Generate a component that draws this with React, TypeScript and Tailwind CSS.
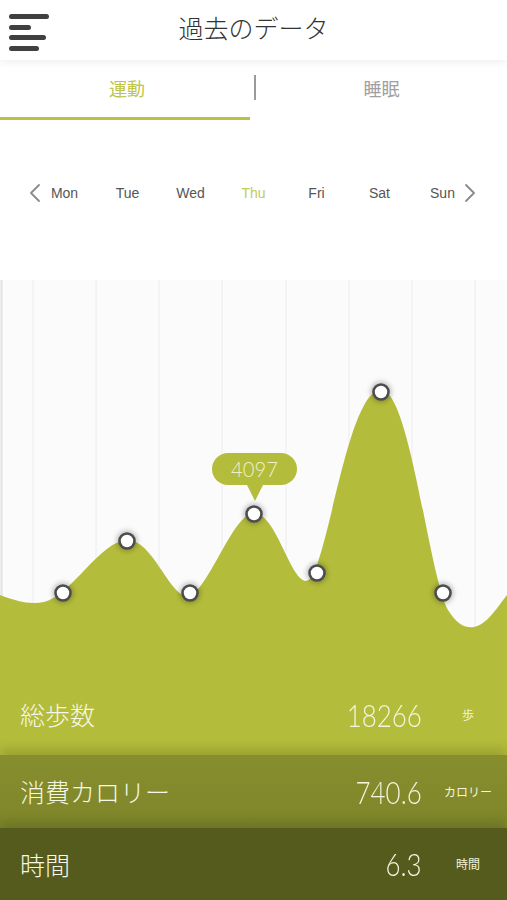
import React from "react";

const GREEN = "#b4bc3b";

const days = ["Mon", "Tue", "Wed", "Thu", "Fri", "Sat", "Sun"];
const points: [number, number][] = [
  [63, 313],
  [127, 261],
  [190, 313],
  [254, 234],
  [317, 293],
  [381, 112],
  [443, 313],
];
const gridX = [1.5, 33, 96, 159, 222, 286, 349, 412, 475];

function Chart() {
  return (
    <svg width="507" height="400" viewBox="0 0 507 400" className="block">
      <defs>
        <filter id="halo" x="-1" y="-1" width="3" height="3">
          <feGaussianBlur stdDeviation="2.4" />
        </filter>
      </defs>
      <rect x="0" y="0" width="507" height="400" fill="#fbfbfb" />
      {gridX.map((x) => (
        <line key={x} x1={x} y1="0" x2={x} y2="400" stroke={x < 3 ? "#e2e2e2" : "#ececec"} strokeWidth={x < 3 ? 2 : 1} />
      ))}
      <path
        d="M0,315 C16,321 30,325 44,322 C72,315 100,261 127,260 C152,259 168,313 186,316 C206,319 232,233 254,233 C276,233 290,300 306,301 C326,302 346,110 381,110 C410,110 428,292 448,330 C458,346 466,348 474,347 C488,344 498,326 507,315 L507,400 L0,400 Z"
        fill={GREEN}
      />
      <rect x="212" y="173" width="85" height="32" rx="16" fill={GREEN} />
      <path d="M246,203 L264,203 L255,221 Z" fill={GREEN} />
      {points.map(([x, y]) => (
        <g key={x}>
          <circle cx={x} cy={y} r="10.5" fill="rgba(0,0,0,0.24)" filter="url(#halo)" />
          <circle cx={x} cy={y} r="7.5" fill="#ffffff" stroke="#4d4d4d" strokeWidth="2.6" />
        </g>
      ))}
      <text
        x="254.5"
        y="197"
        textAnchor="middle"
        fontSize="22"
        fill="#eef1c8"
        style={{ fontFamily: "Lato, 'Noto Sans', sans-serif", fontWeight: 300 }}
        transform="translate(254.5 0) scale(0.92 1) translate(-254.5 0)"
      >
        4097
      </text>
    </svg>
  );
}

function Chevron({ dir }: { dir: "l" | "r" }) {
  return (
    <svg width="12" height="20" viewBox="0 0 12 20" className="shrink-0">
      <polyline
        points={dir === "l" ? "10,2 2,10 10,18" : "2,2 10,10 2,18"}
        fill="none"
        stroke="#8a8a8a"
        strokeWidth="1.8"
        strokeLinecap="round"
        strokeLinejoin="round"
      />
    </svg>
  );
}

function StatRow({
  label,
  value,
  unit,
  bg,
  h,
  shadow,
}: {
  label: string;
  value: string;
  unit: string;
  bg: string;
  h: string;
  shadow?: boolean;
}) {
  return (
    <div
      className={`relative flex items-center pl-[20px] pr-[4px] ${h} ${
        shadow ? "shadow-[0_-6px_10px_rgba(0,0,0,0.14)]" : ""
      }`}
      style={{ background: bg }}
    >
      <div className="flex-1 text-[25px] font-light text-[#f6f7e6] [font-family:'Noto_Sans_CJK_JP',sans-serif] leading-none">
        {label}
      </div>
      <div className="origin-right scale-x-[0.81] text-[32px] font-light text-[#f3f5dc] [font-family:Lato,'Noto_Sans',sans-serif] leading-none">
        {value}
      </div>
      <div className="ml-[11px] w-[70px] text-center text-[12px] text-[#f3f5dc] [font-family:'Noto_Sans_CJK_JP',sans-serif]">
        {unit}
      </div>
    </div>
  );
}

export default function App() {
  return (
    <div className="w-[507px] h-[900px] overflow-hidden bg-white [font-family:'Liberation_Sans','Noto_Sans_CJK_JP',sans-serif]">
      {/* Header */}
      <div className="relative z-10 h-[60px] flex items-center bg-white shadow-[0_2px_8px_rgba(0,0,0,0.07)]">
        <div className="absolute left-[9px] top-[14px] flex flex-col gap-[5.5px]">
          <div className="h-[5px] w-[40px] rounded-full bg-[#404040]" />
          <div className="h-[5px] w-[22px] rounded-full bg-[#404040]" />
          <div className="h-[5px] w-[37px] rounded-full bg-[#404040]" />
          <div className="h-[5px] w-[30px] rounded-full bg-[#404040]" />
        </div>
        <div className="w-full text-center text-[25px] font-light text-[#333] [font-family:'Noto_Sans_CJK_JP',sans-serif] leading-none -mt-[6px]">
          過去のデータ
        </div>
      </div>

      {/* Tabs */}
      <div className="relative h-[60px] flex bg-white">
        <div className="w-[254px] flex flex-col">
          <div className="flex-1 flex items-center justify-center text-[18px] text-[#bcc54a] [font-family:'Noto_Sans_CJK_JP',sans-serif]">
            運動
          </div>
          <div className="h-[3px] w-[250px] bg-[#b9c244]" />
        </div>
        <div className="w-[2px] h-[25px] mt-[15px] bg-[#9a9a9a]" />
        <div className="flex-1 flex items-center justify-center text-[18px] text-[#a0a0a0] [font-family:'Noto_Sans_CJK_JP',sans-serif] pb-[3px]">
          睡眠
        </div>
      </div>

      {/* Days */}
      <div className="h-[160px] pt-[63px] bg-white">
        <div className="flex items-center h-[20px]">
          <div className="w-[33px] flex justify-end">
            <div className="mr-[-8px]">
              <Chevron dir="l" />
            </div>
          </div>
          <div className="w-[441px] grid grid-cols-7">
            {days.map((d) => (
              <div
                key={d}
                className={`text-center text-[14px] ${d === "Thu" ? "text-[#c3cb5a]" : "text-[#555]"}`}
              >
                {d}
              </div>
            ))}
          </div>
          <div className="ml-[-10px]">
            <Chevron dir="r" />
          </div>
        </div>
      </div>

      {/* Chart */}
      <Chart />

      {/* Stats */}
      <StatRow label="総歩数" value="18266" unit="歩" bg={GREEN} h="h-[75px] pb-[6px]" />
      <StatRow
        label="消費カロリー"
        value="740.6"
        unit="カロリー"
        bg="linear-gradient(#868e2e,#7e862a)"
        h="h-[73px]"
        shadow
      />
      <StatRow label="時間" value="6.3" unit="時間" bg="#555b1d" h="h-[72px]" shadow />
    </div>
  );
}
